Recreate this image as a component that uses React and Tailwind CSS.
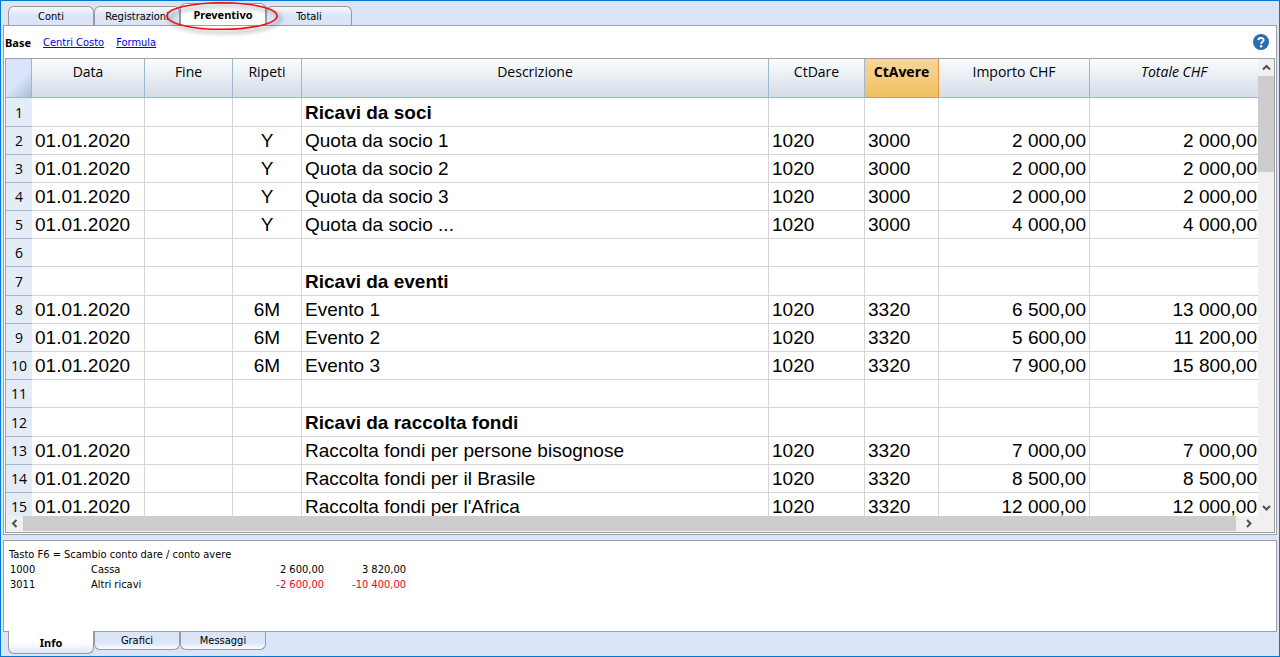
const rows = [
  { title: "Ricavi da soci" },
  { date: "01.01.2020", rep: "Y", desc: "Quota da socio 1", dare: "1020", avere: "3000", imp: "2 000,00", tot: "2 000,00" },
  { date: "01.01.2020", rep: "Y", desc: "Quota da socio 2", dare: "1020", avere: "3000", imp: "2 000,00", tot: "2 000,00" },
  { date: "01.01.2020", rep: "Y", desc: "Quota da socio 3", dare: "1020", avere: "3000", imp: "2 000,00", tot: "2 000,00" },
  { date: "01.01.2020", rep: "Y", desc: "Quota da socio ...", dare: "1020", avere: "3000", imp: "4 000,00", tot: "4 000,00" },
  {},
  { title: "Ricavi da eventi" },
  { date: "01.01.2020", rep: "6M", desc: "Evento 1", dare: "1020", avere: "3320", imp: "6 500,00", tot: "13 000,00" },
  { date: "01.01.2020", rep: "6M", desc: "Evento 2", dare: "1020", avere: "3320", imp: "5 600,00", tot: "11 200,00" },
  { date: "01.01.2020", rep: "6M", desc: "Evento 3", dare: "1020", avere: "3320", imp: "7 900,00", tot: "15 800,00" },
  {},
  { title: "Ricavi da raccolta fondi" },
  { date: "01.01.2020", desc: "Raccolta fondi per persone bisognose", dare: "1020", avere: "3320", imp: "7 000,00", tot: "7 000,00" },
  { date: "01.01.2020", desc: "Raccolta fondi per il Brasile", dare: "1020", avere: "3320", imp: "8 500,00", tot: "8 500,00" },
  { date: "01.01.2020", desc: "Raccolta fondi per l'Africa", dare: "1020", avere: "3320", imp: "12 000,00", tot: "12 000,00" },
];

const headBase = "border-r border-b px-0 pt-[3px] pb-0 align-top leading-5";
const headPlain = `${headBase} border-[#9fb6d0] bg-linear-to-b from-[#fafdfe] to-[#d5dce9] font-normal`;
const cell = "border-r border-b border-[#d4d4d4] px-[3px] py-0 whitespace-nowrap";
const smallText = "font-['DejaVu_Sans_Condensed','Noto_Sans',sans-serif] text-[11px]";
const boldText = "font-['Noto_Sans','Open_Sans',sans-serif] font-bold";
const bottomTab =
  "h-[18px] w-[86px] rounded-b-md border border-t-0 border-[#9a9a9a] bg-linear-to-b from-[#dae5f8] from-60% to-[#fafcff] pt-px";

function TopTab({ children, active }) {
  return (
    <button
      type="button"
      role="tab"
      aria-selected={!!active}
      className={
        active
          ? `h-[22px] w-[86px] rounded-t-md border border-b-0 border-[#9a9a9a] bg-white pt-px text-center ${boldText}`
          : "h-[19px] w-[86px] rounded-t-md border border-b-0 border-[#9a9a9a] bg-linear-to-b from-[#f6f9fe] to-[#dae5f8] to-50% pt-0.5 text-center"
      }
    >
      {children}
    </button>
  );
}

function Chevron({ d, label, className }) {
  return (
    <button type="button" aria-label={label} className={`flex items-center justify-center bg-[#f0f0f0] ${className}`}>
      <svg width="9" height="9" viewBox="0 0 9 9" fill="none" stroke="#505050" strokeWidth="2">
        <path d={d} />
      </svg>
    </button>
  );
}

function BudgetTable() {
  return (
    <table className="w-full table-fixed border-separate border-spacing-0 text-[19px] leading-[27px]">
      <colgroup>
        <col className="w-[26px]" />
        <col className="w-[113px]" />
        <col className="w-[88px]" />
        <col className="w-[69px]" />
        <col />
        <col className="w-[96px]" />
        <col className="w-[74px]" />
        <col className="w-[151px]" />
        <col className="w-[168px]" />
      </colgroup>
      <thead className="font-['Open_Sans','Noto_Sans',sans-serif] text-sm">
        <tr className="h-[39px]">
          <td className="border-r border-b border-[#9fb6d0] bg-linear-135 from-[#dae5fa] from-55% to-[#a9bdd6]" />
          <th className={headPlain}>Data</th>
          <th className={headPlain}>Fine</th>
          <th className={headPlain}>Ripeti</th>
          <th className={headPlain}>Descrizione</th>
          <th className={headPlain}>CtDare</th>
          <th className={`${headBase} border-[#f0953a] bg-linear-to-b from-[#f6d698] to-[#f0c060] font-bold`}>CtAvere</th>
          <th className={headPlain}>Importo CHF</th>
          <th className={`${headPlain} border-r-0 italic`}>Totale CHF</th>
        </tr>
      </thead>
      <tbody>
        {rows.map((r, i) => (
          <tr key={i} className={r.title ? "h-[29px]" : "h-7"}>
            <th scope="row" className="border-b border-[#9fb6d0] bg-[#e4ecf7] p-0 text-center font-['Open_Sans','Noto_Sans',sans-serif] text-sm leading-[27px] font-normal">
              {i + 1}
            </th>
            <td className={cell}>{r.date}</td>
            <td className={cell} />
            <td className={`${cell} text-center`}>{r.rep}</td>
            <td className={`${cell} ${r.title ? "font-bold" : ""}`}>{r.title || r.desc}</td>
            <td className={cell}>{r.dare}</td>
            <td className={cell}>{r.avere}</td>
            <td className={`${cell} text-right`}>{r.imp}</td>
            <td className="border-b border-[#d4d4d4] py-0 pr-px pl-0 text-right whitespace-nowrap">{r.tot}</td>
          </tr>
        ))}
      </tbody>
    </table>
  );
}

export default function App() {
  return (
    <div className="flex h-screen flex-col border border-[#0078d7] bg-[#dae5f9] px-0.5 font-['Liberation_Sans',Arial,sans-serif] text-black">
      <div role="tablist" className={`relative flex h-6 shrink-0 items-end pl-[5px] leading-4 ${smallText}`}>
        <TopTab>Conti</TopTab>
        <TopTab>Registrazioni</TopTab>
        <TopTab active>Preventivo</TopTab>
        <TopTab>Totali</TopTab>
        <svg className="pointer-events-none absolute top-0 left-[160px] z-10 drop-shadow-[3px_3px_2px_rgba(0,0,0,0.45)]" width="120" height="34" fill="none">
          <ellipse cx="59" cy="15" rx="55" ry="13.3" stroke="#ee1111" strokeWidth="1.6" />
        </svg>
      </div>

      <main className="flex min-h-0 flex-1 flex-col border border-[#a0a0a0] bg-white">
        <nav className={`flex h-8 shrink-0 items-center pl-px leading-4 ${smallText}`}>
          <div className="flex gap-3 pt-0.5">
            <span className={boldText}>Base</span>
            <a href="#centri" className="text-[#0000ee] underline underline-offset-1">Centri Costo</a>
            <a href="#formula" className="text-[#0000ee] underline underline-offset-1">Formula</a>
          </div>
          <button type="button" aria-label="Aiuto" className="mr-[7px] ml-auto">
            <svg width="16" height="16" viewBox="0 0 16 16">
              <circle cx="8" cy="8" r="8" fill="#2a6cb0" />
              <path d="M5.4 6.1C5.5 3.400 10.600 3.200 10.600 6C10.600 7.900 8.100 7.800 8.100 10" fill="none" stroke="#fff" strokeWidth="2" />
              <circle cx="8.100" cy="12.200" r="1.250" fill="#fff" />
            </svg>
          </button>
        </nav>
        <div className="mx-px mb-px flex min-h-0 flex-1 flex-col border border-[#a0a0a0] bg-[#f0f0f0] pb-px">
          <div className="flex min-h-0 flex-1">
            <div className="min-w-0 flex-1 overflow-hidden bg-white">
              <BudgetTable />
            </div>
            <div className="flex w-4 shrink-0 flex-col">
              <Chevron label="Su" d="M1 6.500 4.500 3 8 6.500" className="h-[17px]" />
              <div className="h-24 bg-[#cdcdcd]" />
              <Chevron label="Giù" d="M1 3 4.500 6.500 8 3" className="mt-auto h-[17px]" />
            </div>
          </div>
          <div className="flex h-[15px] shrink-0">
            <Chevron label="Sinistra" d="M6.500 1 3 4.500 6.500 8" className="w-[17px]" />
            <div className="flex-1 bg-[#cdcdcd]" />
            <Chevron label="Destra" d="M3 1 6.500 4.500 3 8" className="mr-[17px] ml-1 w-[17px]" />
          </div>
        </div>
      </main>

      <section className={`mt-[5px] h-[92px] shrink-0 border border-[#a0a0a0] bg-white pt-[6px] pl-[5px] leading-[15px] ${smallText}`}>
        <p>Tasto F6 = Scambio conto dare / conto avere</p>
        <table className="table-fixed border-collapse">
          <tbody>
            <tr>
              <td className="w-[82px] pl-px">1000</td>
              <td className="w-[151px]">Cassa</td>
              <td className="w-[82px] text-right">2 600,00</td>
              <td className="w-[82px] text-right">3 820,00</td>
            </tr>
            <tr>
              <td className="pl-px">3011</td>
              <td>Altri ricavi</td>
              <td className="text-right text-[#f00020]">-2 600,00</td>
              <td className="text-right text-[#f00020]">-10 400,00</td>
            </tr>
          </tbody>
        </table>
      </section>
      <div role="tablist" className={`flex h-6 shrink-0 items-start pl-[5px] leading-4 ${smallText}`}>
        <button type="button" role="tab" aria-selected="true" className={`-mt-px h-[23px] w-[86px] rounded-b-md border border-t-0 border-[#9a9a9a] bg-linear-to-b from-white from-50% to-[#dfe8f9] pt-0.5 ${boldText}`}>
          Info
        </button>
        <button type="button" role="tab" className={bottomTab}>
          Grafici
        </button>
        <button type="button" role="tab" className={bottomTab}>
          Messaggi
        </button>
      </div>
    </div>
  );
}
